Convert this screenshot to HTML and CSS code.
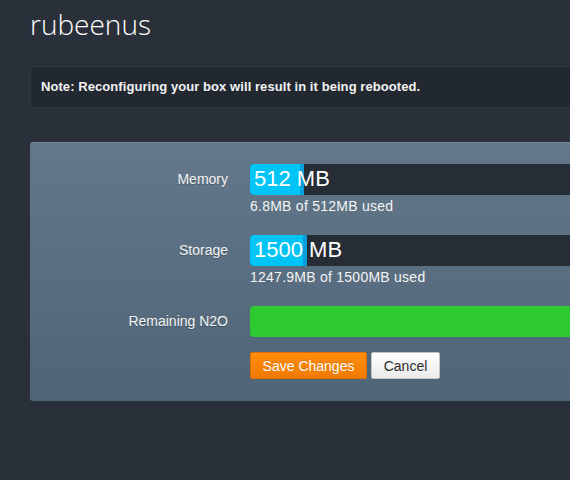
FILE: index.html
```html
<!DOCTYPE html>
<html>
<head>
<meta charset="utf-8">
<link rel="stylesheet" href="styles.css">
</head>
<body>
<div class="page">
  <h1 class="title">rubeenus</h1>
  <div class="note">Note: Reconfiguring your box will result in it being rebooted.</div>
  <form class="panel">
    <div class="row">
      <label class="label">Memory</label>
      <div class="field">
        <div class="track">
          <div class="fill" style="width:50px"></div>
          <span class="value">512 MB</span>
        </div>
        <div class="usage">6.8MB of 512MB used</div>
      </div>
    </div>
    <div class="row">
      <label class="label">Storage</label>
      <div class="field">
        <div class="track">
          <div class="fill" style="width:53px"></div>
          <span class="value">1500 MB</span>
        </div>
        <div class="usage">1247.9MB of 1500MB used</div>
      </div>
    </div>
    <div class="row">
      <label class="label">Remaining N2O</label>
      <div class="field">
        <div class="gauge"></div>
      </div>
    </div>
    <div class="row">
      <span class="label"></span>
      <div class="actions">
        <button type="button" class="btn btn-save">Save Changes</button>
        <button type="button" class="btn btn-cancel">Cancel</button>
      </div>
    </div>
  </form>
</div>
</body>
</html>
```
FILE: styles.css
```css
html, body {
  margin: 0;
  padding: 0;
  background: #2a3039;
  overflow: hidden;
}
body {
  font-family: "Liberation Sans", Arial, sans-serif;
  color: #fff;
}
.page {
  padding-left: 30px;
  overflow: hidden;
  width: 540px;
  height: 480px;
}
.title {
  margin: 0;
  padding-top: 5px;
  font-family: "Open Sans", sans-serif;
  font-weight: 300;
  font-size: 28px;
  line-height: 38px;
  color: #fff;
}
.note {
  margin-top: 23px;
  margin-right: -20px;
  height: 40px;
  line-height: 40px;
  padding: 0 10px;
  background: #22282f;
  border: 1px solid #2f363e;
  border-radius: 3px;
  font-size: 13px;
  font-weight: bold;
  letter-spacing: 0.07px;
  color: #f2f2f2;
  white-space: nowrap;
}
.panel {
  margin: 34px -20px 0 0;
  padding: 21px 0 21px;
  background: linear-gradient(to bottom, #63798b, #4f6476);
  border-top: 1px solid #71889a;
  border-radius: 3px;
  display: flex;
  flex-direction: column;
  gap: 19px;
  box-sizing: border-box;
  height: 259px;
}
.row {
  display: grid;
  grid-template-columns: 198px 1fr;
  column-gap: 22px;
}
.label {
  text-align: right;
  font-size: 14px;
  line-height: 31px;
  color: #f4f4f4;
  text-shadow: 0 1px 0 rgba(0, 0, 0, 0.25);
}
.field {
  display: flex;
  flex-direction: column;
  gap: 2px;
}
.track {
  position: relative;
  height: 31px;
  background: #272d35;
  border-radius: 4px 0 0 4px;
}
.fill {
  position: absolute;
  left: 0;
  top: 0;
  bottom: 0;
  background: #00c4f5;
  border-right: 4px solid #0a9fd9;
  border-radius: 4px 0 0 4px;
}
.value {
  position: relative;
  display: block;
  padding-left: 4px;
  font-size: 22px;
  line-height: 30px;
  color: #fff;
}
.usage {
  font-size: 14px;
  line-height: 19px;
  letter-spacing: 0.25px;
  color: #f4f4f4;
}
.gauge {
  height: 31px;
  background: #2dca32;
  border-radius: 4px 0 0 4px;
}
.actions {
  display: flex;
  gap: 4px;
  margin-top: -4px;
}
.btn {
  height: 27px;
  font-family: "Liberation Sans", Arial, sans-serif;
  font-size: 14px;
  border-radius: 2px;
  box-sizing: border-box;
  margin: 0;
}
.btn-save {
  padding: 0 8px;
  width: 117px;
  color: #fff;
  background: linear-gradient(to bottom, #ff8e0c, #f07a00);
  border: 1px solid #de6f00;
  text-shadow: 0 -1px 0 rgba(0, 0, 0, 0.15);
}
.btn-cancel {
  padding: 0 10px;
  width: 69px;
  color: #2a2a2a;
  background: linear-gradient(to bottom, #ffffff, #ebebeb);
  border: 1px solid #c4c4c4;
}
```
